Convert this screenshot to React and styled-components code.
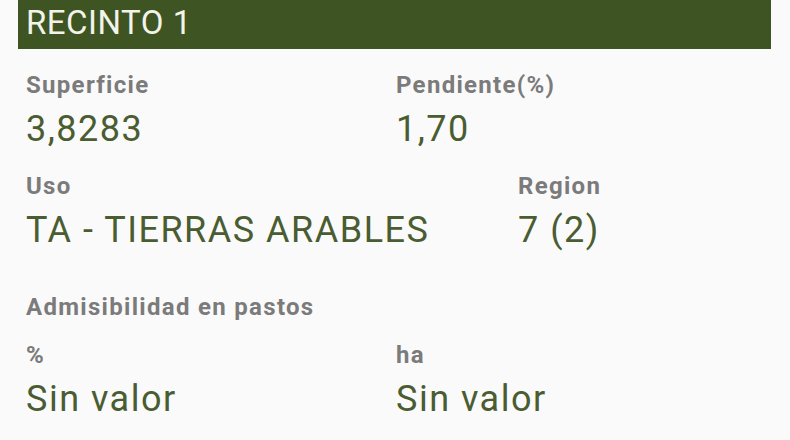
import React from 'react';
import styled, { createGlobalStyle } from 'styled-components';

const GlobalStyle = createGlobalStyle`
  html, body {
    margin: 0;
    padding: 0;
    background: #fafafa;
  }
  body {
    font-family: Roboto, "Noto Sans", "Liberation Sans", sans-serif;
  }
`;

const Page = styled.div`
  width: 790px;
  height: 440px;
  overflow: hidden;
  background: #fafafa;
`;

const TitleBar = styled.div`
  margin: 0 19px 0 18px;
  height: 49px;
  padding-left: 8px;
  background: #3e5523;
  color: #f3f3ea;
  font-size: 33px;
  line-height: 46px;
  letter-spacing: 0.5px;
`;

const Body = styled.div`
  padding: 22px 0 0 26px;
`;

const Row = styled.div`
  display: grid;
  grid-template-columns: ${p => p.cols};
  margin-bottom: ${p => p.gap || 21}px;
`;

const Field = styled.div`
  display: flex;
  flex-direction: column;
`;

const Label = styled.div`
  font-size: 24px;
  line-height: 28px;
  font-weight: 700;
  letter-spacing: 1.3px;
  color: #7b7b7b;
`;

const Value = styled.div`
  margin-top: 8px;
  font-size: 36px;
  line-height: 44px;
  letter-spacing: 1.5px;
  color: #4a5c31;
`;

const SectionTitle = styled(Label)`
  margin-bottom: 20px;
`;

const App = () => {
  return (
    <Page>
      <GlobalStyle />
      <TitleBar>RECINTO 1</TitleBar>
      <Body>
        <Row cols="370px 1fr">
          <Field>
            <Label>Superficie</Label>
            <Value>3,8283</Value>
          </Field>
          <Field>
            <Label>Pendiente(%)</Label>
            <Value>1,70</Value>
          </Field>
        </Row>
        <Row cols="492px 1fr" gap={41}>
          <Field>
            <Label>Uso</Label>
            <Value>TA - TIERRAS ARABLES</Value>
          </Field>
          <Field>
            <Label>Region</Label>
            <Value>7 (2)</Value>
          </Field>
        </Row>
        <SectionTitle>Admisibilidad en pastos</SectionTitle>
        <Row cols="370px 1fr">
          <Field>
            <Label>%</Label>
            <Value>Sin valor</Value>
          </Field>
          <Field>
            <Label>ha</Label>
            <Value>Sin valor</Value>
          </Field>
        </Row>
      </Body>
    </Page>
  );
};

export default App;
